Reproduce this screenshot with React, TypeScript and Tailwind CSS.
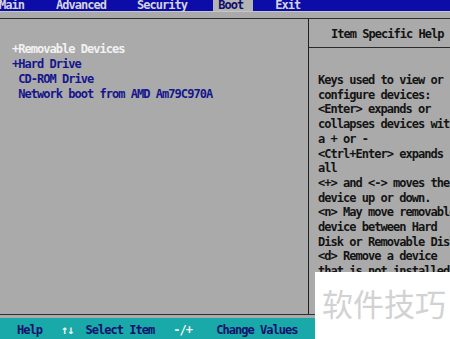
const MENU = [
  { label: 'Main', className: '-ml-px' },
  { label: 'Advanced', className: 'ml-[32px]' },
  { label: 'Security', className: 'ml-[31px]' },
]

const BOOT_ITEMS = [
  { label: '+Removable Devices', className: 'text-[#f2f2f2]' },
  { label: '+Hard Drive', className: 'text-[#16168c]' },
  { label: ' CD-ROM Drive', className: 'text-[#16168c]' },
  { label: ' Network boot from AMD Am79C970A', className: 'text-[#16168c]' },
]

const HELP_LINES = [
  'Keys used to view or',
  'configure devices:',
  '<Enter> expands or',
  'collapses devices with',
  'a + or -',
  '<Ctrl+Enter> expands',
  'all',
  '<+> and <-> moves the',
  'device up or down.',
  '<n> May move removable',
  'device between Hard',
  'Disk or Removable Disk',
  '<d> Remove a device',
  'that is not installed.',
]

export default function App() {
  return (
    <div className="relative w-[450px] h-[339px] overflow-hidden bg-[#aaaaaa] font-['DejaVu_Sans_Mono','Liberation_Mono',monospace] text-[12px] font-bold tracking-[-0.97px] whitespace-pre">

      {/* Menu bar */}
      <div className="flex h-[11px] items-center bg-[#0c0ca8] leading-[11px] text-[#d4d4de]">
        {MENU.map((m) => (
          <span key={m.label} className={m.className}>{m.label}</span>
        ))}
        <span className="ml-[26px] w-[40px] h-[11px] pl-[5px] bg-[#b4b4b4] text-[#10106a]">Boot</span>
        <span className="ml-[22px]">Exit</span>
      </div>
      <div className="h-px bg-[#c6c6c6]" />
      <div className="h-[6px]" />

      {/* Main frame */}
      <div className="flex h-[297px] border-y border-[#2e2e2e]">
        <div className="w-[308px] pt-[23px] pl-[12px] leading-[15px]">
          {BOOT_ITEMS.map((item) => (
            <div key={item.label} className={item.className}>{item.label}</div>
          ))}
        </div>
        <div className="flex-1 flex flex-col border-l border-[#202020] overflow-hidden">
          <div className="flex h-[29px] items-center border-b border-[#2a2a2a] pl-[22px] pt-px text-[#121212]">
            Item Specific Help
          </div>
          <div className="pt-[25px] pl-[9px] leading-[14.7px] text-[#141414]">
            {HELP_LINES.map((line) => (
              <div key={line}>{line}</div>
            ))}
          </div>
        </div>
      </div>
      <div className="h-[3px]" />

      {/* Status bar */}
      <div className="flex h-[21px] items-center bg-[#1aa9a9] pt-[3px] leading-[18px]">
        <span className="ml-[17px] text-[#10106e]">Help</span>
        <span className="ml-[19px] text-[#f0f0f0]">↑↓</span>
        <span className="ml-[12px] text-[#10106e]">Select Item</span>
        <span className="ml-[19px] text-[#f0f0f0]">-/+</span>
        <span className="ml-[24px] text-[#10106e]">Change Values</span>
      </div>

      {/* Watermark */}
      <div className="absolute left-[315px] top-[272px] w-[135px] h-[67px] bg-white pl-[7px] pt-[13px] tracking-normal font-normal font-['Noto_Sans_CJK_SC',sans-serif] text-[31px] leading-[36px] text-[#d2d2d2]">
        软件技巧
      </div>
    </div>
  )
}
